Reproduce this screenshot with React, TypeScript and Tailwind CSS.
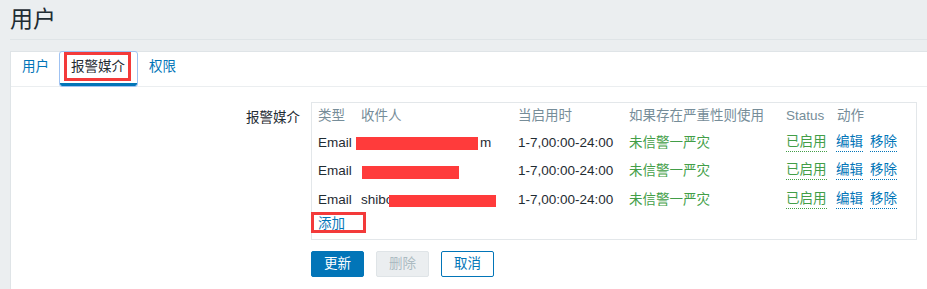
import React from "react";

const font = { fontFamily: '"Liberation Sans", "Noto Sans CJK SC", sans-serif' };

function Tabs() {
  return (
    <div className="flex h-[35px] border-b border-[#ebeef0] text-[13.5px]">
      <div className="flex items-center px-[11px] pb-[3px] text-[#0275b8]">用户</div>
      <div className="relative flex items-center pl-[11px] pr-[12px] border-b-[3px] border-[#0275b8] text-[#1f2c33] outline outline-1 outline-[#9fc2f2] rounded-[2px]">
        报警媒介
        <span className="absolute left-[4px] right-[6px] top-0 h-[29px] border-[3px] border-[#f33a3a]" />
      </div>
      <div className="flex items-center px-[12px] pb-[3px] text-[#0275b8]">权限</div>
    </div>
  );
}

function Redact({ className }: { className: string }) {
  return <span className={`inline-block bg-[#ff3b3b] align-middle ${className}`} />;
}

function StatusCell() {
  return (
    <div className="flex items-center">
      <span className="text-[#429e47] leading-none border-b border-dotted border-[#429e47] pb-[2px]">已启用</span>
    </div>
  );
}

function ActionCell() {
  return (
    <div className="flex items-center gap-[7px] -ml-[1px]">
      <span className="text-[#0275b8] leading-none border-b border-dotted border-[#0275b8] pb-[2px]">编辑</span>
      <span className="text-[#0275b8] leading-none border-b border-dotted border-[#0275b8] pb-[2px]">移除</span>
    </div>
  );
}

const cols = "grid grid-cols-[43px_157px_111px_157px_51px_1fr] items-center";

export default function App() {
  return (
    <div className="h-[289px] overflow-hidden bg-[#ebeef0] pl-[10px] flex flex-col text-[#1f2c33]" style={font}>
      <div className="h-[40px] shrink-0 border-b border-[#dfe4e7] flex items-center">
        <h1 className="text-[23px] leading-none font-normal text-[#1f2c33]">用户</h1>
      </div>
      <div className="mt-[11px] h-[260px] shrink-0 bg-white border border-r-0 border-[#dfe4e7]">
        <Tabs />
        <div className="pt-[15px] text-[13.5px]">
          <div className="flex gap-[11px]">
            <div className="w-[289px] text-right mt-[7px] leading-[18px]">报警媒介</div>
            <div className="w-[606px] border border-[#e3e7ea] pl-[6px] pb-[6px]">
              <div className={`${cols} h-[27px] text-[#768d99]`}>
                <span>类型</span>
                <span>收件人</span>
                <span>当启用时</span>
                <span>如果存在严重性则使用</span>
                <span>Status</span>
                <span>动作</span>
              </div>
              <div className={`${cols} h-[27px]`}>
                <span>Email</span>
                <span className="flex items-center">
                  <Redact className="w-[122px] h-[13px] -ml-[5px]" />
                  <span className="ml-[2px]">m</span>
                </span>
                <span>1-7,00:00-24:00</span>
                <span className="text-[#429e47]">未信警一严灾</span>
                <StatusCell />
                <ActionCell />
              </div>
              <div className={`${cols} h-[29px]`}>
                <span>Email</span>
                <span className="flex items-center">
                  <Redact className="w-[97px] h-[13px] ml-[1px] mt-[2px]" />
                </span>
                <span>1-7,00:00-24:00</span>
                <span className="text-[#429e47]">未信警一严灾</span>
                <StatusCell />
                <ActionCell />
              </div>
              <div className={`${cols} h-[29px]`}>
                <span>Email</span>
                <span className="flex items-center">
                  <span>shibo</span>
                  <Redact className="w-[107px] h-[12px] -ml-[4px] mt-[1px]" />
                </span>
                <span>1-7,00:00-24:00</span>
                <span className="text-[#429e47]">未信警一严灾</span>
                <StatusCell />
                <ActionCell />
              </div>
              <div className="relative h-[18px] flex items-center">
                <span className="text-[#0275b8]">添加</span>
                <span className="absolute -left-[7px] -top-[3px] w-[55px] h-[21px] border-[3px] border-[#f33a3a]" />
              </div>
            </div>
          </div>
          <div className="mt-[11px] ml-[300px] flex gap-[12px]">
            <button className="w-[53px] h-[26px] rounded-[2px] bg-[#0275b8] border border-[#0275b8] text-white text-[13.5px]">更新</button>
            <button className="w-[53px] h-[26px] rounded-[2px] bg-[#ebeef0] border border-[#dfe4e7] text-[#acbbc2] text-[13.5px]">删除</button>
            <button className="w-[53px] h-[26px] rounded-[2px] bg-white border border-[#0275b8] text-[#0275b8] text-[13.5px]">取消</button>
          </div>
        </div>
      </div>
    </div>
  );
}
